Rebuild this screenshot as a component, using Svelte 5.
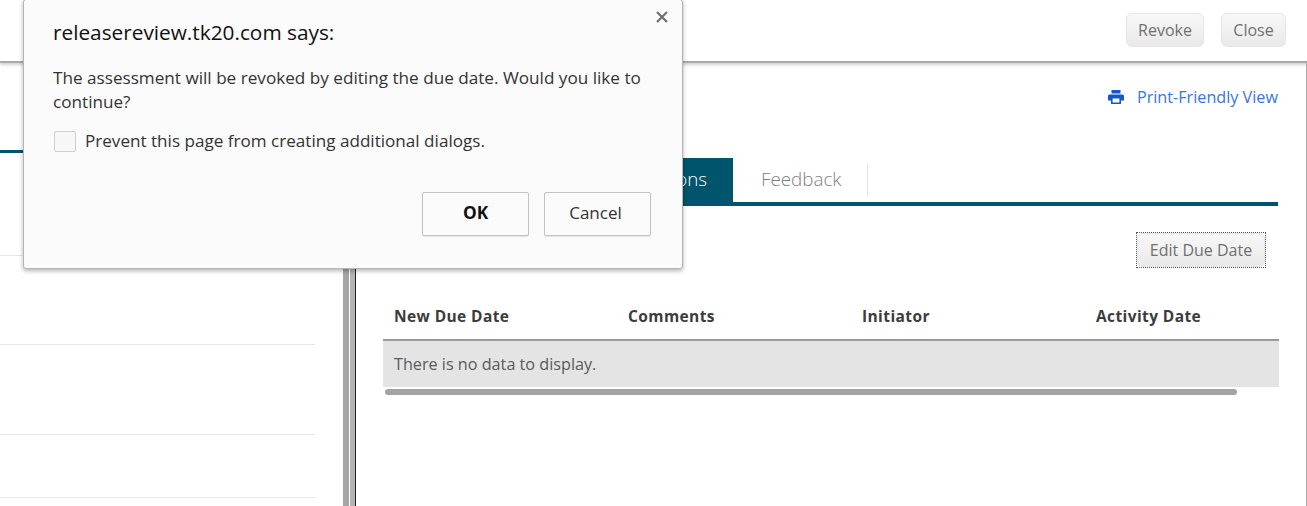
<script lang="ts">
  const columns = ['New Due Date', 'Comments', 'Initiator', 'Activity Date'];
  const leftRows = [89, 90, 63];
</script>

<div class="page">
  <header class="topbar">
    <button class="btn revoke">Revoke</button>
    <button class="btn close">Close</button>
  </header>

  <div class="body">
    <aside class="left">
      <div class="left-tabs"></div>
      <div class="left-list">
        {#each leftRows as h}
          <div class="left-row" style="height: {h}px"></div>
        {/each}
      </div>
    </aside>
    <div class="splitter"></div>

    <main class="panel">
      <div class="print">
        <svg viewBox="0 0 16 14" width="16" height="14" fill="currentColor" aria-hidden="true">
          <path d="M3.5 0h9v3.5h-9z" />
          <path fill-rule="evenodd" d="M1.5 4.5h13a1.5 1.5 0 0 1 1.5 1.5v4.5h-3V14H3v-3.5H0V6a1.5 1.5 0 0 1 1.5-1.5zM4.6 8.5v4h6.8v-4z" />
        </svg>
        <a href="#print">Print-Friendly View</a>
      </div>

      <nav class="tabs">
        <span class="tab active">Extensions</span>
        <span class="tab">Feedback</span>
      </nav>

      <div class="actions">
        <span class="focus-ring"><button class="btn edit">Edit Due Date</button></span>
      </div>

      <div class="table">
        <div class="thead">
          {#each columns as c}
            <div class="th">{c}</div>
          {/each}
        </div>
        <div class="empty">There is no data to display.</div>
      </div>
      <div class="scrollbar"></div>
    </main>
  </div>

  <div class="dialog" role="dialog">
    <button class="x" aria-label="Close">
      <svg viewBox="0 0 12 12" width="12" height="12" fill="none" stroke="#6f6f6f" stroke-width="2.2">
        <path d="M1 1l10 10M11 1L1 11" />
      </svg>
    </button>
    <h1>releasereview.tk20.com says:</h1>
    <p>The assessment will be revoked by editing the due date. Would you like to continue?</p>
    <label class="prevent">
      <span class="box"></span>
      Prevent this page from creating additional dialogs.
    </label>
    <div class="dialog-actions">
      <button class="dlg-btn ok">OK</button>
      <button class="dlg-btn cancel">Cancel</button>
    </div>
  </div>
</div>

<style>
  :global(body) {
    margin: 0;
    background: #fff;
    overflow: hidden;
  }

  .page {
    position: relative;
    width: 1307px;
    height: 506px;
    overflow: hidden;
    font-family: 'Open Sans', sans-serif;
    color: #555;
  }

  .topbar {
    display: flex;
    justify-content: flex-end;
    align-items: flex-start;
    gap: 17px;
    box-sizing: border-box;
    height: 63px;
    padding: 13px 21px 0 0;
    border-bottom: 2px solid #a9a9a9;
    box-shadow: 0 2px 3px rgba(0, 0, 0, 0.18);
  }

  .btn {
    box-sizing: border-box;
    height: 34px;
    padding: 0;
    border: 1px solid #e6e6e6;
    border-radius: 6px;
    background: linear-gradient(#f8f8f8, #e9e9e9);
    font: 16px 'Open Sans', sans-serif;
    color: #707070;
  }

  .revoke { width: 78px; }
  .close { width: 65px; }

  .body {
    display: flex;
    height: 443px;
  }

  .left {
    width: 343px;
    flex-shrink: 0;
  }

  .left-tabs {
    width: 40px;
    height: 87px;
    border-bottom: 3px solid #00546b;
  }

  .left-list {
    width: 315px;
    margin-top: 102px;
    border-top: 1px solid #e6e6e6;
  }

  .left-row {
    box-sizing: border-box;
    border-bottom: 1px solid #e6e6e6;
  }

  .splitter {
    width: 6px;
    margin-right: 1px;
    flex-shrink: 0;
    background: #a6a6a6;
  }

  .panel {
    flex: 1;
    box-sizing: border-box;
    min-width: 0;
    padding: 0 28px 0 27px;
    border-left: 5px solid #b4b4b4;
    border-right: 1px solid #a9a9a9;
    position: relative;
  }

  .panel::before {
    content: '';
    position: absolute;
    left: 0;
    top: 0;
    bottom: 0;
    width: 1px;
    background: #222;
  }

  .print {
    display: flex;
    justify-content: flex-end;
    align-items: center;
    gap: 13px;
    height: 20px;
    margin-top: 24px;
    color: #1556c9;
    font-size: 16.2px;
  }

  .print a {
    color: #3a74e0;
    text-decoration: none;
  }

  .tabs {
    display: flex;
    height: 44px;
    margin-top: 51px;
    border-bottom: 4px solid #00546b;
  }

  .tab {
    display: flex;
    align-items: center;
    box-sizing: border-box;
    padding: 0 27px 2px 28px;
    font-size: 18.8px;
    font-weight: 300;
    color: #808080;
    position: relative;
  }

  .tab:last-child::after {
    content: '';
    position: absolute;
    right: 0;
    top: 7px;
    bottom: 7px;
    width: 1px;
    background: #e4e4e4;
  }

  .tab.active {
    width: 351px;
    justify-content: flex-end;
    padding: 0 26px 2px 0;
    background: #00546b;
    color: #fff;
  }

  .actions {
    display: flex;
    justify-content: flex-end;
    margin-top: 26px;
    padding-right: 12px;
  }

  .focus-ring {
    display: block;
    border: 1px dotted #555;
    line-height: 0;
  }

  .btn.edit {
    width: 128px;
  }

  .table {
    margin: 28px -1px 0 1px;
  }

  .thead {
    display: grid;
    grid-template-columns: repeat(4, 234px);
    height: 45px;
    box-sizing: border-box;
    border-bottom: 2px solid #9a9a9a;
  }

  .th {
    padding: 9px 11px 0;
    font-size: 15.5px;
    font-weight: 700;
    color: #3c3c3c;
    letter-spacing: 0.4px;
  }

  .empty {
    display: flex;
    align-items: center;
    height: 46px;
    padding-left: 11px;
    background: #e4e4e4;
    font-size: 16.2px;
    color: #5a5a5a;
  }

  .scrollbar {
    width: 852px;
    height: 6px;
    margin: 2px 0 0 3px;
    border-radius: 3px;
    background: #a3a3a3;
  }

  /* browser alert on top of the page */
  .dialog {
    position: absolute;
    left: 23px;
    top: -1px;
    box-sizing: border-box;
    width: 660px;
    height: 270px;
    padding: 19px 30px 0 29px;
    background: #fbfbfb;
    border: 1px solid #b5b5b5;
    border-radius: 3px;
    box-shadow: 0 2px 4px rgba(0, 0, 0, 0.3);
    color: #333;
  }

  .x {
    position: absolute;
    right: 14px;
    top: 11px;
    display: flex;
    padding: 0;
    border: 0;
    background: none;
  }

  h1 {
    margin: 0;
    font-size: 20.8px;
    font-weight: 400;
    line-height: 26px;
    color: #111;
  }

  p {
    margin: 21px 0 0;
    width: 600px;
    font-size: 17.15px;
    line-height: 24px;
  }

  .prevent {
    display: flex;
    align-items: center;
    gap: 9px;
    margin-top: 15px;
    font-size: 17.1px;
    line-height: 24px;
  }

  .box {
    box-sizing: border-box;
    width: 22px;
    height: 21px;
    margin-left: 1px;
    border: 1px solid #d0d0d0;
    border-radius: 2px;
    background: #f7f7f7;
  }

  .dialog-actions {
    display: flex;
    justify-content: flex-end;
    gap: 15px;
    margin-top: 39px;
    padding-right: 1px;
  }

  .dlg-btn {
    box-sizing: border-box;
    width: 107px;
    height: 44px;
    padding: 0 0 4px;
    border: 1px solid #c4c4c4;
    border-radius: 2px;
    background: #fbfbfb;
    box-shadow: 0 1px 1px rgba(0, 0, 0, 0.1);
    font: 17.3px 'Open Sans', sans-serif;
    color: #333;
  }

  .dlg-btn.cancel {
    padding-right: 4px;
    font-size: 17px;
  }

  .dlg-btn.ok {
    font-weight: 700;
    color: #111;
  }
</style>
